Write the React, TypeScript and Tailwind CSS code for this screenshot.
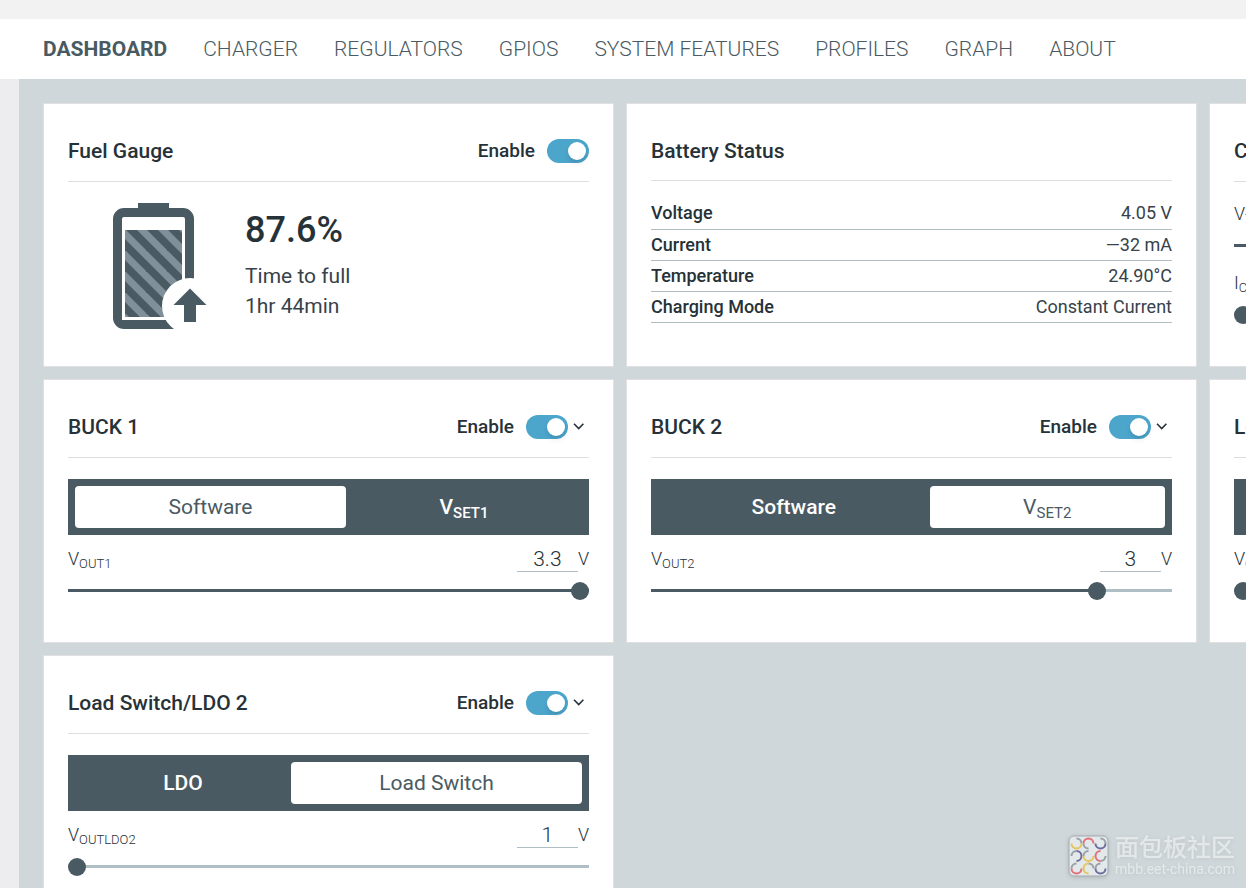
import React, { useState } from "react";

const navItems = [
  "DASHBOARD",
  "CHARGER",
  "REGULATORS",
  "GPIOS",
  "SYSTEM FEATURES",
  "PROFILES",
  "GRAPH",
  "ABOUT",
];

const batteryRows = [
  { label: "Voltage", value: "4.05 V" },
  { label: "Current", value: "—32 mA" },
  { label: "Temperature", value: "24.90°C" },
  { label: "Charging Mode", value: "Constant Current" },
];

const Toggle = ({ id }: { id: string }) => {
  const [on, setOn] = useState(true);
  return (
    <div className="flex items-center gap-3">
      <label htmlFor={id} className="text-[19px] leading-7 font-medium">
        Enable
      </label>
      <input
        id={id}
        type="checkbox"
        checked={on}
        onChange={() => setOn(!on)}
        className="flex h-6 w-[42px] cursor-pointer appearance-none items-center rounded-full bg-[#b0bec5] px-[3px] before:size-[18px] before:rounded-full before:bg-white before:shadow-md checked:justify-end checked:bg-[#4ca5cb]"
      />
    </div>
  );
};

type CardProps = {
  title: string;
  toggle?: boolean;
  menu?: boolean;
  children?: React.ReactNode;
};

const Card = ({ title, toggle, menu, children }: CardProps) => (
  <section className="h-66 border border-[#e0e0e0] bg-white p-6 text-[#263238]">
    <header
      className={
        toggle
          ? "flex items-start justify-between border-b border-[#dcdfe0] pt-2 pb-[15px]"
          : "flex items-start justify-between border-b border-[#dcdfe0] pt-2 pb-[14px]"
      }
    >
      <h2 className="text-[21px] leading-[30px] font-medium">{title}</h2>
      <div className="flex h-[30px] items-center">
        {toggle && <Toggle id={"enable-" + title} />}
        {menu && (
          <button aria-label={title + " options"} className="flex h-6 w-[21px] items-center justify-center">
            <svg width="12" height="8" viewBox="0 0 12 8" fill="none" stroke="#263238" strokeWidth="1.6">
              <path d="M1 .8 5.700 5.500l4.700-4.700" />
            </svg>
          </button>
        )}
      </div>
    </header>
    {children}
  </section>
);

type SliderProps = {
  name: string;
  sub: string;
  unit: string;
  min: number;
  max: number;
  initial: number;
};

const SliderField = ({ name, sub, unit, min, max, initial }: SliderProps) => {
  const [value, setValue] = useState(initial);
  const fill = ((value - min) / (max - min)) * 100;
  const id = "slider-" + sub;
  return (
    <div>
      <div className="flex h-[30px] items-stretch justify-between text-lg leading-[34px] font-light">
        <label htmlFor={id}>
          {name}
          <sub className="text-[13px]">{sub}</sub>
        </label>
        <div className="flex">
          <input
            type="text"
            aria-label={name + sub + " value"}
            value={value}
            onChange={(e) => setValue(Number(e.target.value) || min)}
            className="w-[61px] border-b border-[#b0bec5] pt-1 text-center text-[21px] outline-none"
          />
          <span>{unit}</span>
        </div>
      </div>
      <input
        id={id}
        type="range"
        min={min}
        max={max}
        step={0.1}
        value={value}
        onChange={(e) => setValue(Number(e.target.value))}
        style={{ "--fill": fill + "%" } as React.CSSProperties}
        className="mt-[10px] block h-[17px] w-full cursor-pointer appearance-none bg-transparent [&::-webkit-slider-runnable-track]:h-[3px] [&::-webkit-slider-runnable-track]:bg-[linear-gradient(to_right,#4a5a62_var(--fill),#b0bec5_var(--fill))] [&::-webkit-slider-thumb]:mt-[-7px] [&::-webkit-slider-thumb]:size-[18px] [&::-webkit-slider-thumb]:appearance-none [&::-webkit-slider-thumb]:rounded-full [&::-webkit-slider-thumb]:bg-[#4a5a62]"
      />
    </div>
  );
};

type SegmentedProps = {
  options: React.ReactNode[];
  initial: number;
};

const Segmented = ({ options, initial }: SegmentedProps) => {
  const [picked, setPicked] = useState(initial);
  return (
    <div className="mt-[21px] mb-[7px] flex h-14 bg-[#4a5a62] p-[7px] text-[21px] leading-[30px]">
      {options.map((option, i) => (
        <button
          key={i}
          onClick={() => setPicked(i)}
          className={
            i === picked
              ? "flex-auto rounded bg-white text-[#4a5a62]"
              : "flex-auto rounded font-medium text-white"
          }
        >
          {option}
        </button>
      ))}
    </div>
  );
};

const VSet = ({ n }: { n: number }) => (
  <>
    V<sub className="text-[15px]">SET{n}</sub>
  </>
);

const BatteryIcon = () => (
  <svg width="94" height="126" viewBox="0 0 94 126">
    <defs>
      <pattern id="stripes" width="21" height="21" patternUnits="userSpaceOnUse" patternTransform="translate(12 27)">
        <rect width="21" height="21" fill="#4a5a62" />
        <path d="M0 0h1L21 20v1h-9L0 9zM12 0h9v9z" fill="#80909b" />
      </pattern>
    </defs>
    <path fill="#4a5a62" d="M25 0h31v5h-31z" />
    <path
      fill="#4a5a62"
      fillRule="evenodd"
      d="M11 5h59a11 11 0 0 1 11 11v99a11 11 0 0 1-11 11H11A11 11 0 0 1 0 115V16A11 11 0 0 1 11 5zM11 14a2 2 0 0 0-2 2v101h63V16a2 2 0 0 0-2-2z"
    />
    <path fill="url(#stripes)" d="M12 27h57v87h-57z" />
    <circle cx="77" cy="103" r="28" fill="#fff" />
    <path fill="#4a5a62" d="M77 85.500 93.500 102H83v17H71v-17H60.500z" />
  </svg>
);

// hooks of the community logo: a coloured half circle with a grey tail
const hooks = [
  { color: "#e3c65f", place: "translate(8.500 8.500)" },
  { color: "#e2707a", place: "translate(20.500 8.500) rotate(180)" },
  { color: "#6f6c9c", place: "translate(32.500 8.500)" },
  { color: "#6f6c9c", place: "translate(8.500 21) rotate(-90)" },
  { color: "#e3c65f", place: "translate(20.500 21) scale(-1 1)" },
  { color: "#e2707a", place: "translate(32.500 21) rotate(90)" },
  { color: "#e2707a", place: "translate(8.500 33.500) scale(-1 1)" },
  { color: "#e3c65f", place: "translate(20.500 33.500) scale(-1 1) rotate(-90)" },
  { color: "#6f6c9c", place: "translate(32.500 33.500) scale(-1 1)" },
];

const Watermark = () => (
  <div className="absolute right-[9px] bottom-[10px] flex items-center gap-[6px] font-['Roboto','Noto_Sans_CJK_SC',sans-serif] text-white/50 drop-shadow-sm">
    <svg width="41" height="42" viewBox="0 0 41 42" fill="none" strokeWidth="2">
      <rect x="1" y="1" width="39" height="40" rx="5" fill="#e3e8eb" stroke="#a3abaf" strokeWidth="1" />
      {hooks.map((hook) => (
        <g key={hook.place} transform={hook.place}>
          <path d="M5 0A5 5 0 0 0 0-5" stroke="#9aa0a6" />
          <path d="M-5 0a5 5 0 0 0 10 0" stroke={hook.color} />
        </g>
      ))}
    </svg>
    <div className="w-[122px] pt-[3px]">
      <p className="text-2xl leading-6 font-medium">面包板社区</p>
      <p className="text-sm leading-[18px]">mbb.eet-china.com</p>
    </div>
  </div>
);

const App = () => {
  const [active, setActive] = useState("DASHBOARD");

  return (
    <div className="relative flex h-screen flex-col overflow-hidden bg-[#ededf0] font-['Roboto',sans-serif]">
      <div className="h-[19px] shrink-0 bg-[#f2f2f2]" />
      <nav className="flex h-15 shrink-0 items-center gap-9 bg-white px-[43px] text-[21px] leading-[30px] whitespace-nowrap text-[#4a5a62]">
        {navItems.map((item) => (
          <a
            key={item}
            href={"#" + item.toLowerCase().replace(" ", "-")}
            onClick={() => setActive(item)}
            className={item === active ? "font-bold" : "font-light"}
          >
            {item}
          </a>
        ))}
      </nav>
      <main className="ml-[19px] grid flex-1 grid-cols-[repeat(3,minmax(571px,1fr))] content-start gap-3 overflow-hidden bg-[#cfd7da] p-6">
        <Card title="Fuel Gauge" toggle>
          <div className="flex gap-[38px] pt-[21px] pl-[45px]">
            <BatteryIcon />
            <div className="text-[21px] leading-[30px]">
              <p className="pt-[5px] pb-[9px] text-4xl leading-[44px] font-medium">87.6%</p>
              <p className="text-[#37424a]">Time to full</p>
              <p className="text-[#37424a]">1hr 44min</p>
            </div>
          </div>
        </Card>
        <Card title="Battery Status">
          <table className="mt-[17px] w-full text-lg">
            <tbody>
              {batteryRows.map((row) => (
                <tr key={row.label} className="h-[31px] border-b border-[#b0bec5]">
                  <th scope="row" className="text-left font-medium">
                    {row.label}
                  </th>
                  <td className="text-right text-[#37424a]">{row.value}</td>
                </tr>
              ))}
            </tbody>
          </table>
        </Card>
        <Card title="Charger" toggle menu>
          <div className="flex flex-col gap-3 pt-[15px]">
            <SliderField name="V" sub="TERM" unit="V" min={3.5} max={4.4} initial={4.2} />
            <SliderField name="I" sub="CHG" unit="mA" min={32} max={800} initial={32} />
          </div>
        </Card>
        <Card title="BUCK 1" toggle menu>
          <Segmented options={["Software", <VSet n={1} />]} initial={0} />
          <SliderField name="V" sub="OUT1" unit="V" min={1} max={3.3} initial={3.3} />
        </Card>
        <Card title="BUCK 2" toggle menu>
          <Segmented options={["Software", <VSet n={2} />]} initial={1} />
          <SliderField name="V" sub="OUT2" unit="V" min={1} max={3.3} initial={3} />
        </Card>
        <Card title="Load Switch/LDO 1" toggle menu>
          <Segmented options={["LDO", "Load Switch"]} initial={1} />
          <SliderField name="V" sub="OUTLDO1" unit="V" min={1} max={3.3} initial={1} />
        </Card>
        <Card title="Load Switch/LDO 2" toggle menu>
          <Segmented options={["LDO", "Load Switch"]} initial={1} />
          <SliderField name="V" sub="OUTLDO2" unit="V" min={1} max={3.3} initial={1} />
        </Card>
      </main>
      <Watermark />
    </div>
  );
};

export default App;
